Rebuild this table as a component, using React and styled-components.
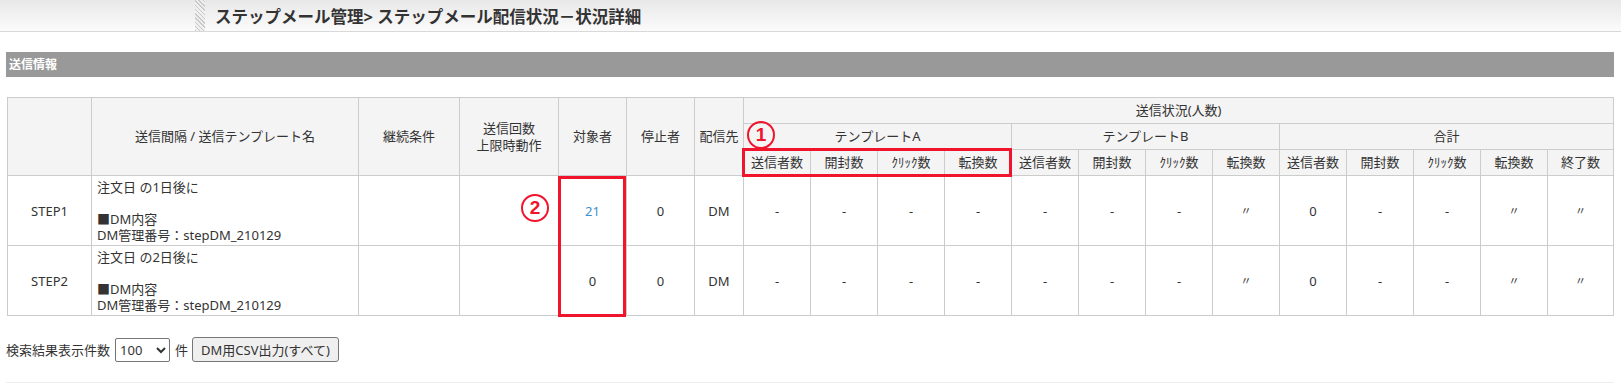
import React from 'react';
import styled, { createGlobalStyle } from 'styled-components';

const GlobalStyle = createGlobalStyle`
  body {
    margin: 0;
    background: #fff;
    color: #333;
    font-family: "Noto Sans", "Noto Sans CJK JP", sans-serif;
    font-size: 13px;
  }
`;

const PageHeader = styled.div`
  display: flex;
  align-items: center;
  height: 31px;
  padding-left: 195px;
  background: linear-gradient(#e8e8e8, #fbfbfb);
  border-bottom: 1px solid #d9d9d9;
`;

const Hatch = styled.div`
  align-self: stretch;
  width: 10px;
  background: repeating-linear-gradient(45deg, #c9c9c9 0 1px, #efefef 1px 3px);
`;

const Title = styled.h1`
  margin: 0 0 0 10px;
  font-size: 16.5px;
  font-weight: bold;
  color: #333;
`;

const Main = styled.div`
  padding: 20px 7px 0 6px;
`;

const SectionBar = styled.div`
  height: 25px;
  line-height: 25px;
  padding-left: 3px;
  background: #999;
  color: #fff;
  font-size: 12px;
  font-weight: bold;
`;

const TableWrap = styled.div`
  position: relative;
  margin: 20px 1px 0 1px;
`;

const Table = styled.table`
  width: 1606px;
  border-collapse: collapse;
  table-layout: fixed;
  font-size: 13px;
`;

const HeadRow = styled.tr`
  height: 26px;
`;

const BodyRow = styled.tr`
  height: 70px;
`;

const Th = styled.th`
  background: #f3f4f3;
  border: 1px solid #ccc;
  font-weight: normal;
  color: #333;
  padding: 0;
  line-height: 17px;
  text-align: center;
  vertical-align: middle;
`;

const Td = styled.td`
  border: 1px solid #ccc;
  padding: 0 5px;
  text-align: ${p => (p.$left ? 'left' : 'center')};
  vertical-align: middle;
  line-height: 16px;
  color: ${p => (p.$link ? '#3d8fd0' : '#333')};
  font-size: ${p => (p.$ditto ? '11px' : '13px')};
`;

const Mark = styled.div`
  position: absolute;
  box-sizing: border-box;
  border: 3px solid #f0142c;
  pointer-events: none;
`;

const Circled = styled.div`
  position: absolute;
  box-sizing: border-box;
  width: 28px;
  height: 28px;
  border: 2px solid #f0142c;
  border-radius: 50%;
  color: #f0142c;
  font-size: 19px;
  font-weight: bold;
  line-height: 24px;
  text-align: center;
  font-family: "Liberation Sans", sans-serif;
`;

const Controls = styled.div`
  display: flex;
  align-items: center;
  gap: 5px;
  margin-top: 21px;
`;

const Select = styled.select`
  width: 55px;
  height: 24px;
  font-size: 13px;
  font-family: inherit;
  border: 1px solid #767676;
  border-radius: 2px;
  background: #fff;
  color: #333;
`;

const Button = styled.button`
  height: 25px;
  padding: 0 8px;
  margin-left: -1px;
  font-size: 13px;
  font-family: inherit;
  color: #333;
  background: #efefef;
  border: 1px solid #767676;
  border-radius: 3px;
`;

const Rule = styled.div`
  margin-top: 20px;
  border-top: 1px solid #eee;
`;

const widths = [84, 267, 101, 99, 68, 68, 49, 67, 67, 67, 67, 67, 67, 67, 67, 67, 67, 67, 67, 66];

const subHeads = ['送信者数', '開封数', 'ｸﾘｯｸ数', '転換数'];

const steps = [
  { name: 'STEP1', days: 1, target: '21', link: true },
  { name: 'STEP2', days: 2, target: '0', link: false },
];

const stats = ['-', '-', '-', '-', '-', '-', '-', '〃', '0', '-', '-', '〃', '〃'];

export default function App() {
  return (
    <>
      <GlobalStyle />
      <PageHeader>
        <Hatch />
        <Title>ステップメール管理&gt; ステップメール配信状況－状況詳細</Title>
      </PageHeader>
      <Main>
        <SectionBar>送信情報</SectionBar>
        <TableWrap>
          <Table>
            <colgroup>
              {widths.map((w, i) => (
                <col key={i} style={{ width: w }} />
              ))}
            </colgroup>
            <thead>
              <HeadRow>
                <Th rowSpan={3}></Th>
                <Th rowSpan={3}>送信間隔 / 送信テンプレート名</Th>
                <Th rowSpan={3}>継続条件</Th>
                <Th rowSpan={3}>
                  送信回数
                  <br />
                  上限時動作
                </Th>
                <Th rowSpan={3}>対象者</Th>
                <Th rowSpan={3}>停止者</Th>
                <Th rowSpan={3}>配信先</Th>
                <Th colSpan={13}>送信状況(人数)</Th>
              </HeadRow>
              <HeadRow>
                <Th colSpan={4}>テンプレートA</Th>
                <Th colSpan={4}>テンプレートB</Th>
                <Th colSpan={5}>合計</Th>
              </HeadRow>
              <HeadRow>
                {subHeads.map((h, i) => (
                  <Th key={'a' + i}>{h}</Th>
                ))}
                {subHeads.map((h, i) => (
                  <Th key={'b' + i}>{h}</Th>
                ))}
                {subHeads.map((h, i) => (
                  <Th key={'c' + i}>{h}</Th>
                ))}
                <Th>終了数</Th>
              </HeadRow>
            </thead>
            <tbody>
              {steps.map(s => (
                <BodyRow key={s.name}>
                  <Td>{s.name}</Td>
                  <Td $left>
                    注文日 の{s.days}日後に
                    <br />
                    <br />
                    ■DM内容
                    <br />
                    DM管理番号：stepDM_210129
                  </Td>
                  <Td></Td>
                  <Td></Td>
                  <Td $link={s.link}>{s.target}</Td>
                  <Td>0</Td>
                  <Td>DM</Td>
                  {stats.map((v, i) => (
                    <Td key={i} $ditto={v === '〃'}>
                      {v}
                    </Td>
                  ))}
                </BodyRow>
              ))}
            </tbody>
          </Table>
          <Mark style={{ left: 735, top: 51, width: 270, height: 29 }} />
          <Mark style={{ left: 551, top: 79, width: 68, height: 141 }} />
          <Circled style={{ left: 740, top: 24 }}>1</Circled>
          <Circled style={{ left: 514, top: 97 }}>2</Circled>
        </TableWrap>
        <Controls>
          <span>検索結果表示件数</span>
          <Select defaultValue="100">
            <option>20</option>
            <option>50</option>
            <option>100</option>
          </Select>
          <span>件</span>
          <Button>DM用CSV出力(すべて)</Button>
        </Controls>
        <Rule />
      </Main>
    </>
  );
}
